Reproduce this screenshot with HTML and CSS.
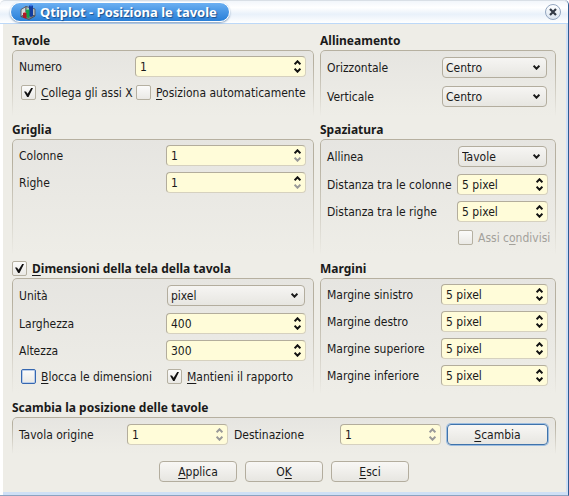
FILE: index.html
```html
<!DOCTYPE html>
<html lang="it">
<head>
<meta charset="utf-8">
<title>Qtiplot - Posiziona le tavole</title>
<link rel="stylesheet" href="styles.css">
</head>
<body>
<svg class="defs" aria-hidden="true">
  <symbol id="up" viewBox="0 0 7 5"><path d="M.6 4.3 3.5 1.3 6.4 4.3" fill="none" stroke="currentColor" stroke-width="2"/></symbol>
  <symbol id="down" viewBox="0 0 7 5"><path d="M.6.7 3.5 3.7 6.4.7" fill="none" stroke="currentColor" stroke-width="2"/></symbol>
</svg>
<main class="window">
  <header class="titlebar">
    <div class="caption">
      <svg class="logo" viewBox="0 0 16 16" aria-hidden="true">
        <path d="M1 5.500 6 2.500v8L1 13z" fill="#d5d8da" stroke="#596069"/>
        <path d="M6 2.500 15 5v7l-9-2z" fill="#b4b9bd" stroke="#596069"/>
        <path d="M1 12.500 6 10l9 2-6 3.500z" fill="#777d83" stroke="#50565c"/>
        <path d="M9 1.500h4V12l-2 1-2-1z" fill="#123c9e"/><path d="M9 1.500 11 .2l2 1.300-2 1z" fill="#3a78e8"/>
        <path d="M6 5.500h3.500v8l-1 .5-2.500-1z" fill="#16a04a"/><path d="M6 5.500l1.500-1 2 1z" fill="#7cf0a0"/>
        <path d="M3 9h3.500v5l-1 .5L3 13.500z" fill="#b01828"/><path d="M3 9l1.500-1 2 1z" fill="#f06068"/>
      </svg>
      <h1>Qtiplot - Posiziona le tavole</h1>
    </div>
    <button class="close" type="button" aria-label="Chiudi"><svg viewBox="0 0 8 8"><path d="M1 1l6 6M7 1 1 7" stroke="#333a46" stroke-width="2.200"/></svg></button>
  </header>
  <form class="content">
    <div class="groups">
      <section class="group">
        <h2>Tavole</h2>
        <div class="box">
          <div class="row narrow">
            <label for="num">Numero</label>
            <span class="spin"><input id="num" type="text" value="1"><button type="button" aria-label="Più"><svg><use href="#up"/></svg></button><button type="button" aria-label="Meno"><svg><use href="#down"/></svg></button></span>
          </div>
          <div class="row checks narrow">
            <label class="check indent"><input type="checkbox" checked><span><u>C</u>ollega gli assi X</span></label>
            <label class="check"><input type="checkbox"><span><u>P</u>osiziona automaticamente</span></label>
          </div>
        </div>
      </section>
      <section class="group">
        <h2>Allineamento</h2>
        <div class="box">
          <div class="row margins">
            <label for="oriz">Orizzontale</label>
            <span class="combo"><select id="oriz"><option>Centro</option></select><svg><use href="#down"/></svg></span>
          </div>
          <div class="row margins">
            <label for="vert">Verticale</label>
            <span class="combo"><select id="vert"><option>Centro</option></select><svg><use href="#down"/></svg></span>
          </div>
        </div>
      </section>
      <section class="group">
        <h2>Griglia</h2>
        <div class="box">
          <div class="row wide">
            <label for="col">Colonne</label>
            <span class="spin"><input id="col" type="text" value="1"><button type="button" aria-label="Più"><svg><use href="#up"/></svg></button><button type="button" aria-label="Meno" disabled><svg><use href="#down"/></svg></button></span>
          </div>
          <div class="row wide">
            <label for="rig">Righe</label>
            <span class="spin"><input id="rig" type="text" value="1"><button type="button" aria-label="Più"><svg><use href="#up"/></svg></button><button type="button" aria-label="Meno" disabled><svg><use href="#down"/></svg></button></span>
          </div>
        </div>
      </section>
      <section class="group">
        <h2>Spaziatura</h2>
        <div class="box">
          <div class="row spacing">
            <label for="all">Allinea</label>
            <span class="combo"><select id="all"><option>Tavole</option></select><svg><use href="#down"/></svg></span>
          </div>
          <div class="row spacing">
            <label for="dcol">Distanza tra le colonne</label>
            <span class="spin"><input id="dcol" type="text" value="5 pixel"><button type="button" aria-label="Più"><svg><use href="#up"/></svg></button><button type="button" aria-label="Meno"><svg><use href="#down"/></svg></button></span>
          </div>
          <div class="row spacing">
            <label for="drig">Distanza tra le righe</label>
            <span class="spin"><input id="drig" type="text" value="5 pixel"><button type="button" aria-label="Più"><svg><use href="#up"/></svg></button><button type="button" aria-label="Meno"><svg><use href="#down"/></svg></button></span>
          </div>
          <div class="row checks spacing">
            <label class="check off"><input type="checkbox" disabled><span>Assi c<u>o</u>ndivisi</span></label>
          </div>
        </div>
      </section>
      <section class="group">
        <h2><label class="check"><input type="checkbox" checked><span><u>D</u>imensioni della tela della tavola</span></label></h2>
        <div class="box">
          <div class="row wide">
            <label for="unit">Unità</label>
            <span class="combo"><select id="unit"><option>pixel</option></select><svg><use href="#down"/></svg></span>
          </div>
          <div class="row wide">
            <label for="larg">Larghezza</label>
            <span class="spin"><input id="larg" type="text" value="400"><button type="button" aria-label="Più"><svg><use href="#up"/></svg></button><button type="button" aria-label="Meno"><svg><use href="#down"/></svg></button></span>
          </div>
          <div class="row wide">
            <label for="alt">Altezza</label>
            <span class="spin"><input id="alt" type="text" value="300"><button type="button" aria-label="Più"><svg><use href="#up"/></svg></button><button type="button" aria-label="Meno"><svg><use href="#down"/></svg></button></span>
          </div>
          <div class="row checks wide">
            <label class="check indent"><input class="focus" type="checkbox"><span><u>B</u>locca le dimensioni</span></label>
            <label class="check"><input type="checkbox" checked><span><u>M</u>antieni il rapporto</span></label>
          </div>
        </div>
      </section>
      <section class="group">
        <h2>Margini</h2>
        <div class="box">
          <div class="row margins">
            <label for="ms">Margine sinistro</label>
            <span class="spin"><input id="ms" type="text" value="5 pixel"><button type="button" aria-label="Più"><svg><use href="#up"/></svg></button><button type="button" aria-label="Meno"><svg><use href="#down"/></svg></button></span>
          </div>
          <div class="row margins">
            <label for="md">Margine destro</label>
            <span class="spin"><input id="md" type="text" value="5 pixel"><button type="button" aria-label="Più"><svg><use href="#up"/></svg></button><button type="button" aria-label="Meno"><svg><use href="#down"/></svg></button></span>
          </div>
          <div class="row margins">
            <label for="mu">Margine superiore</label>
            <span class="spin"><input id="mu" type="text" value="5 pixel"><button type="button" aria-label="Più"><svg><use href="#up"/></svg></button><button type="button" aria-label="Meno"><svg><use href="#down"/></svg></button></span>
          </div>
          <div class="row margins">
            <label for="mi">Margine inferiore</label>
            <span class="spin"><input id="mi" type="text" value="5 pixel"><button type="button" aria-label="Più"><svg><use href="#up"/></svg></button><button type="button" aria-label="Meno"><svg><use href="#down"/></svg></button></span>
          </div>
        </div>
      </section>
      <section class="group full">
        <h2>Scambia la posizione delle tavole</h2>
        <div class="box">
          <div class="row swap">
            <label for="orig">Tavola origine</label>
            <span class="spin"><input id="orig" type="text" value="1"><button type="button" aria-label="Più" disabled><svg><use href="#up"/></svg></button><button type="button" aria-label="Meno" disabled><svg><use href="#down"/></svg></button></span>
            <label for="dest">Destinazione</label>
            <span class="spin"><input id="dest" type="text" value="1"><button type="button" aria-label="Più" disabled><svg><use href="#up"/></svg></button><button type="button" aria-label="Meno" disabled><svg><use href="#down"/></svg></button></span>
            <button class="push default" type="button"><span><u>S</u>cambia</span></button>
          </div>
        </div>
      </section>
    </div>
    <footer class="actions">
      <button class="push" type="button"><span><u>A</u>pplica</span></button>
      <button class="push" type="button"><span>O<u>K</u></span></button>
      <button class="push" type="button"><span><u>E</u>sci</span></button>
    </footer>
  </form>
</main>
</body>
</html>
```
FILE: styles.css
```css
* { box-sizing: border-box; }

body {
  margin: 0;
  background: #fff;
  color: #1a1a1a;
  font: 12px/16px "DejaVu Sans Condensed", "DejaVu Sans", sans-serif;
}

input, select, button { font: inherit; color: inherit; margin: 0; }
u { text-decoration: underline 1px; text-underline-offset: 2px; text-decoration-skip-ink: none; }
.defs { display: none; }

.window {
  display: flex;
  flex-direction: column;
  min-height: 100vh;
  border-right: 1px solid #2f5c92;
  border-bottom: 1px solid #8ba3c0;
  border-radius: 5px 5px 0 0;
}

.titlebar {
  display: flex;
  align-items: center;
  justify-content: space-between;
  height: 24px;
  padding: 0 7px 1px 10px;
  border-top: 1px solid #d9dfe6;
  border-bottom: 1px solid #bcd8f8;
  background: linear-gradient(#f2f6fb, #fff 30%, #e9f1fa 60%, #fff);
  border-radius: 5px 5px 0 0;
}

.caption {
  display: flex;
  align-items: center;
  gap: 4px;
  height: 20px;
  padding: 0 12px 0 9px;
  border: 1px solid #fff;
  border-radius: 10px;
  background: linear-gradient(#6db0f2, #4a98e6 45%, #2a80d8);
  box-shadow: 0 1px 2px #7d99b8;
}
.logo { width: 16px; height: 16px; }
h1 { margin: 0; font: bold 13px/16px "Noto Sans", sans-serif; color: #fff; text-shadow: 1px 1px 1px #1b4f8c; }

.close {
  display: grid;
  place-items: center;
  width: 16px;
  height: 16px;
  padding: 0;
  border: 1px solid #93a6c0;
  border-radius: 50%;
  background: linear-gradient(#fff, #dbe5f1);
}
.close svg { width: 8px; height: 8px; }

.content {
  flex: 1;
  margin-left: 3px;
  padding: 7px 10px 10px 9px;
  background: #eeede7;
  border-right: 2px solid #cfe0f6;
  border-bottom: 3px solid #cfe0f6;
}

.groups { display: grid; grid-template-columns: minmax(0, 302fr) minmax(0, 236fr); gap: 4px 6px; }
.full { grid-column: 1 / -1; }
.group { display: flex; flex-direction: column; }

h2 { margin: 0; height: 19px; font: bold 12px/19px "Noto Sans", sans-serif; }

.box {
  position: relative;
  flex: 1;
  display: flex;
  flex-direction: column;
  gap: 6px;
  padding: 6px 8px 8px 7px;
  border-radius: 5px 5px 0 0;
  background: linear-gradient(#e6e5e1, #eeede7);
}
.box::before {
  content: "";
  position: absolute;
  inset: 0;
  border: 1px solid #b6b0a0;
  border-bottom: 0;
  border-radius: 5px 5px 0 0;
  mask-image: linear-gradient(#000 20%, transparent);
  pointer-events: none;
}

.row { display: grid; align-items: center; }
.narrow { grid-template-columns: 116px minmax(0, 1fr); }
.wide { grid-template-columns: 147px minmax(0, 1fr); }
.margins { grid-template-columns: 114px minmax(0, 1fr); }
.spacing { grid-template-columns: 130px minmax(0, 1fr); }
.swap { grid-template-columns: 102px 1fr 100px 1fr 1fr; column-gap: 6px; min-height: 23px; }
.row label { white-space: nowrap; }

.spin {
  display: grid;
  grid-template: 1fr 1fr / 1fr 13px;
  height: 21px;
  padding: 2px 1px 3px 4px;
  border: 1px solid #d6d1bf;
  border-top-color: #b3ad9c;
  border-left-color: #b3ad9c;
  border-radius: 4px;
  background: #fffcd9;
}
.spin input {
  grid-row: 1 / 3;
  width: 100%;
  min-width: 0;
  height: 15px;
  padding: 0;
  border: 0;
  outline: 0;
  background: none;
}
.spin button { display: grid; place-items: center; padding: 0; border: 0; background: none; color: #111; }
.spin button:disabled { color: #999; }
.spin svg, .combo svg { display: block; width: 7px; height: 5px; }

.combo { display: grid; grid-template-columns: 1fr 14px; align-items: center; height: 23px; padding: 1px; }
.combo select {
  grid-area: 1 / 1 / 2 / 3;
  appearance: none;
  width: 100%;
  height: 21px;
  padding: 1px 16px 0 3px;
  border: 1px solid #b3ad9e;
  border-radius: 4px;
  background: linear-gradient(#f6f5f3, #e7e6e1);
  line-height: 18px;
}
.combo svg { grid-area: 1 / 2; pointer-events: none; }

.checks { height: 19px; }
.check { display: flex; align-items: center; gap: 5px; }
.checks.spacing .check { grid-column: 2; padding-left: 1px; }
.checks .check + .check { padding-left: 1px; }
.indent { padding-left: 2px; }
.off { color: #a3a19b; }

.check input {
  appearance: none;
  display: grid;
  flex: none;
  place-items: center;
  width: 15px;
  height: 15px;
  border: 1px solid #b5b0a1;
  border-radius: 2px;
  background: linear-gradient(#fbfbfa, #eae9e5);
}
.check input:checked::before {
  content: "";
  width: 9px;
  height: 9px;
  background: #111;
  clip-path: polygon(0 40%, 22% 40%, 40% 64%, 80% 0, 100% 0, 50% 100%, 35% 100%);
}
.check input.focus { border-color: #3567b0; box-shadow: inset 0 0 0 1px #b9cdea; }

.push {
  width: 100%;
  height: 21px;
  padding: 1px 0 0;
  border: 1px solid #b3ad9e;
  border-radius: 4px;
  background: linear-gradient(#f8f7f5, #e7e6e1);
  line-height: 17px;
}
.default { border-color: #3f73ab; box-shadow: 0 0 0 1px #9dbde0; }

.actions { display: flex; justify-content: center; gap: 8px; padding-top: 7px; }
.actions .push { width: 78px; }
```
